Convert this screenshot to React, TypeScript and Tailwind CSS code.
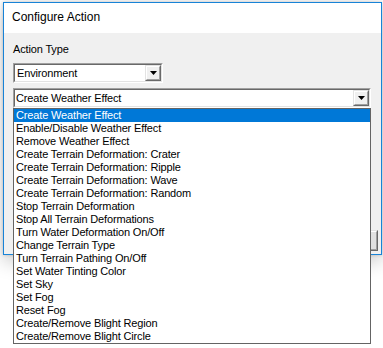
import React from "react";

const items = [
  "Create Weather Effect",
  "Enable/Disable Weather Effect",
  "Remove Weather Effect",
  "Create Terrain Deformation: Crater",
  "Create Terrain Deformation: Ripple",
  "Create Terrain Deformation: Wave",
  "Create Terrain Deformation: Random",
  "Stop Terrain Deformation",
  "Stop All Terrain Deformations",
  "Turn Water Deformation On/Off",
  "Change Terrain Type",
  "Turn Terrain Pathing On/Off",
  "Set Water Tinting Color",
  "Set Sky",
  "Set Fog",
  "Reset Fog",
  "Create/Remove Blight Region",
  "Create/Remove Blight Circle",
];

function Arrow() {
  return (
    <svg width="7" height="4" viewBox="0 0 7 4" className="block">
      <path d="M0 0H7L3.5 4Z" fill="#000" />
    </svg>
  );
}

function DropButton() {
  return (
    <div className="h-full w-[16px] border border-t-[#e3e3e3] border-l-[#e3e3e3] border-r-[#696969] border-b-[#696969]">
      <div className="h-full w-full border border-t-white border-l-white border-r-[#a0a0a0] border-b-[#a0a0a0] bg-[#f0f0f0] flex items-center justify-center">
        <Arrow />
      </div>
    </div>
  );
}

function Combo({ text, width, textPad }: { text: string; width: string; textPad: string }) {
  return (
    <div className={`${width} h-[20px] border border-t-[#a0a0a0] border-l-[#a0a0a0] border-r-white border-b-white`}>
      <div className="h-full w-full border border-t-[#696969] border-l-[#696969] border-r-[#e3e3e3] border-b-[#e3e3e3] bg-white flex items-center">
        <div className={`flex-1 ${textPad} text-[11px] leading-[13px] tracking-[-0.15px] text-black whitespace-nowrap`}>
          {text}
        </div>
        <DropButton />
      </div>
    </div>
  );
}

export default function App() {
  return (
    <div className="relative w-[383px] h-[348px] bg-white overflow-hidden font-['Liberation_Sans',Arial,sans-serif] text-black">
      <div className="ml-[3px] mt-[2px] w-[379px] h-[253px] border border-[#1883d7] bg-[#f0f0f0] flex flex-col shadow-[0_0_3px_rgba(0,0,0,0.18),0_6px_18px_rgba(0,0,0,0.22)]">
        <div className="h-[30px] bg-white pl-[8px] pt-[6px] text-[12px] leading-4">Configure Action</div>
        <div className="flex-1 flex flex-col pl-[9px] pt-[10px]">
          <div className="text-[11px] leading-[13px] tracking-[-0.15px]">Action Type</div>
          <div className="mt-[7px]">
            <Combo text="Environment" width="w-[150px]" textPad="pl-[2px]" />
          </div>
          <div className="mt-[5px]">
            <Combo text="Create Weather Effect" width="w-[358px]" textPad="pl-[1px]" />
          </div>
          <div className="flex-1" />
          <div className="flex justify-end pr-[3px] pb-[3px]">
            <div className="w-[75px] h-[21px] border border-t-[#e3e3e3] border-l-[#e3e3e3] border-r-[#696969] border-b-[#696969]">
              <div className="h-full w-full border border-t-white border-l-white border-r-[#a0a0a0] border-b-[#a0a0a0] bg-[#e1e1e1]" />
            </div>
          </div>
        </div>
      </div>

      <div className="absolute left-[13px] top-[108px] w-[358px] h-[236px] border border-[#646464] bg-white">
        {items.map((it, i) => (
          <div
            key={i}
            className={`h-[13px] pl-[2px] text-[11px] leading-[13px] tracking-[-0.15px] whitespace-nowrap ${
              i === 0 ? "bg-[#0078d7] text-white" : "text-black"
            }`}
          >
            {it}
          </div>
        ))}
      </div>
    </div>
  );
}
